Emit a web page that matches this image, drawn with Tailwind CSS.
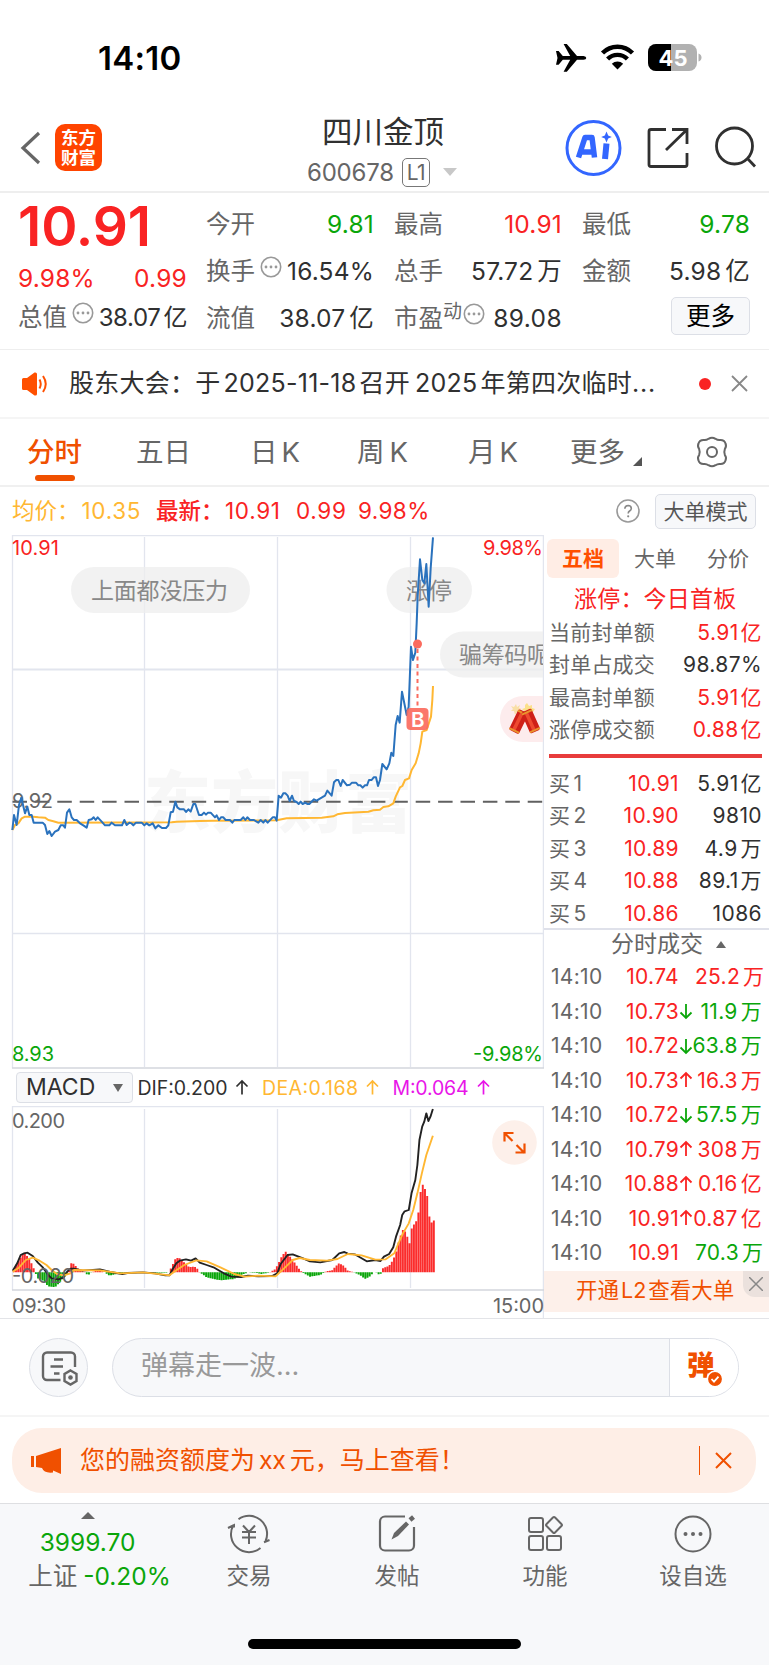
<!DOCTYPE html>
<html lang="zh-CN">
<head>
<meta charset="utf-8">
<title>四川金顶 600678</title>
<script src="https://cdn.jsdelivr.net/npm/@tailwindcss/browser@4"></script>
</head>
<body class="bg-white text-[#303030] font-['Inter','Noto_Sans_CJK_SC',sans-serif]">
<div class="w-[769px] h-[1665px] flex flex-col overflow-hidden whitespace-nowrap">

  <!-- status bar -->
  <div class="h-[115px] shrink-0 flex justify-between pl-[98px] pr-[67px]">
    <div class="mt-[38px] h-10 leading-10 text-[33px] font-semibold text-black tracking-[0.3px]">14:10</div>
    <svg class="mt-[40px]" width="147" height="36" viewBox="556 40 147 36">
      <path fill="#000" d="M557 51h2.600l4.200 5h7.400l-6.600-12h3.200l10.200 12h6.500q2.800.6 2.800 1.900t-2.800 1.900h-6.500l-10.200 12h-3.200l6.600-12h-7.400l-4.200 5h-2.600l1.500-6.900z"/>
      <g fill="none" stroke="#000" stroke-width="4.400"><path d="M603.500 53a21 21 0 0 1 30 0"/><path d="M608.600 59a14 14 0 0 1 19.800 0"/></g>
      <path fill="#000" d="M612.800 63.800a8.500 8.500 0 0 1 11.400 0l-5.700 5.700z"/>
      <clipPath id="cell"><rect x="649" y="44" width="49" height="27" rx="8"/></clipPath>
      <g clip-path="url(#cell)"><rect x="649" y="44" width="49" height="27" fill="#b1b1b1"/><rect x="649" y="44" width="23" height="27" fill="#000"/></g>
      <path d="M699.500 53.500q3 1 3 4t-3 4z" fill="#b1b1b1"/>
      <text x="674" y="65.500" text-anchor="middle" font-size="22" font-weight="700" fill="#fff" textLength="29">45</text>
    </svg>
  </div>

  <!-- navigation -->
  <div class="h-[78px] shrink-0 flex border-b-2 border-[#eeeeee] pl-[19px]">
    <svg class="mt-[15px]" width="24" height="36" viewBox="0 0 24 36"><path d="M20 3 4 18 20 33" fill="none" stroke="#666" stroke-width="3.200"/></svg>
    <div class="ml-3 mt-[9px] w-[47px] h-[47px] rounded-[10px] bg-[#ff4400] text-white font-bold text-[17.500px] leading-[19.500px] flex flex-col items-center justify-center"><span>东方</span><span>财富</span></div>
    <div class="ml-[206px] w-[150px] flex flex-col">
      <div class="h-[34px] leading-[34px] text-[30.500px] text-center">四川金顶</div>
      <div class="mt-[7px] -ml-px h-8 flex items-center text-[#666] text-[24px] tracking-[-0.2px]">
        <span class="mt-px">600678</span>
        <span class="ml-[8px] w-[28px] h-[29px] border border-[#777] rounded-[5px] text-[21px] leading-[27px] text-center tracking-[-0.5px]">L1</span>
        <svg class="ml-[13px] shrink-0" width="14" height="8"><path d="M0 0h14L7 8z" fill="#c8c8c8"/></svg>
      </div>
    </div>
    <svg class="ml-[105px] mt-[3px]" width="196" height="60" viewBox="564 118 196 60">
      <circle cx="594.500" cy="148" r="26.500" fill="none" stroke="#3366ff" stroke-width="3"/>
      <path d="M579.500 157.500 586 137.500h7l2.500 20M582 152h11" fill="none" stroke="#3366ff" stroke-width="5.500" stroke-linejoin="round"/>
      <path d="m607.500 143.500-1.500 15.500" stroke="#3366ff" stroke-width="6"/>
      <path d="m607.500 131.500 1.700 4 3.600 1.500-3.600 1.500-1.700 4-1.700-4-3.600-1.500 3.600-1.500z" fill="#3366ff"/>
      <g fill="none" stroke="#303030" stroke-width="2.800"><path d="M667 129.500h-15a2 2 0 0 0-2 2v33a2 2 0 0 0 2 2h34a2 2 0 0 0 2-2V153M673 129.500h15V144M687 130.500 667 150"/>
      <circle cx="735.500" cy="146" r="18"/><path d="m748 158 8 8.500"/></g>
    </svg>
  </div>

  <!-- quote summary -->
  <div class="h-[157px] shrink-0 flex border-b border-[#eeeeee] pl-[18px] text-[24.500px]">
    <div class="w-[169px]">
      <div class="mt-[4px] h-[58px] leading-[58px] text-[55px] font-semibold text-[#f92323] tracking-[-0.1px]">10.91</div>
      <div class="mt-[7px] h-8 flex justify-between items-center text-[#f92323] tracking-[0.2px]"><span>9.98%</span><span>0.99</span></div>
      <div class="mt-[7px] h-8 flex items-center"><span class="text-[#666]">总值</span>
        <svg class="ml-[5px] mb-[9px]" width="22" height="22"><circle cx="11" cy="11" r="9.700" fill="none" stroke="#999" stroke-width="1.600"/><g fill="#999"><circle cx="6" cy="11" r="1.400"/><circle cx="11" cy="11" r="1.400"/><circle cx="16" cy="11" r="1.400"/></g></svg>
        <span class="ml-auto tracking-[-0.4px] pt-0.5 text-[24px]">38.07<span class="ml-[3px]">亿</span></span></div>
    </div>
    <div class="ml-[19px] w-[168px] flex flex-col gap-[15px] mt-[15px]">
      <div class="h-8 flex items-center justify-between"><span class="text-[#666]">今开</span><span class="text-[#0aa60a] tracking-[0.2px]">9.81</span></div>
      <div class="h-8 flex items-center"><span class="text-[#666]">换手</span>
        <svg class="ml-[5px] mb-[9px]" width="22" height="22"><circle cx="11" cy="11" r="9.700" fill="none" stroke="#999" stroke-width="1.600"/><g fill="#999"><circle cx="6" cy="11" r="1.400"/><circle cx="11" cy="11" r="1.400"/><circle cx="16" cy="11" r="1.400"/></g></svg>
        <span class="ml-auto tracking-[0.2px]">16.54%</span></div>
      <div class="h-8 flex items-center justify-between"><span class="text-[#666]">流值</span><span class="tracking-[0.2px]">38.07<span class="ml-1">亿</span></span></div>
    </div>
    <div class="ml-5 w-[168px] flex flex-col gap-[15px] mt-[15px]">
      <div class="h-8 flex items-center justify-between"><span class="text-[#666]">最高</span><span class="text-[#f92323] tracking-[0.2px]">10.91</span></div>
      <div class="h-8 flex items-center justify-between"><span class="text-[#666]">总手</span><span class="tracking-[0.2px]">57.72<span class="ml-1">万</span></span></div>
      <div class="h-8 flex items-center"><span class="text-[#666]">市盈</span><span class="text-[#666] text-[19px] mb-3">动</span>
        <svg class="ml-[1px] mb-[9px]" width="22" height="22"><circle cx="11" cy="11" r="9.700" fill="none" stroke="#999" stroke-width="1.600"/><g fill="#999"><circle cx="6" cy="11" r="1.400"/><circle cx="11" cy="11" r="1.400"/><circle cx="16" cy="11" r="1.400"/></g></svg>
        <span class="ml-auto tracking-[0.4px]">89.08</span></div>
    </div>
    <div class="ml-5 w-[168px] flex flex-col gap-[15px] mt-[15px]">
      <div class="h-8 flex items-center justify-between"><span class="text-[#666]">最低</span><span class="text-[#0aa60a] tracking-[0.2px]">9.78</span></div>
      <div class="h-8 flex items-center justify-between"><span class="text-[#666]">金额</span><span class="tracking-[0.2px]">5.98<span class="ml-1">亿</span></span></div>
      <div class="-mt-[5px] self-end w-[79px] h-[38px] leading-[36px] text-center rounded-[5px] border border-[#dcdfe6] bg-[#f7f8fa] text-black">更多</div>
    </div>
  </div>

  <!-- announcement -->
  <div class="h-[69px] shrink-0 flex items-center border-b-2 border-[#f5f5f5] pl-[22px] text-[25px]">
    <svg width="26" height="24" viewBox="0 0 26 24"><path d="M0 7.500Q0 6 1.500 6H5l7.500-5.500Q15 0 15 2v20q0 2-2.500 1.500L5 18H1.500Q0 18 0 16.500z" fill="#ff5000"/><path d="M17.500 7.500q2.500 4.500 0 9M21 4q5.500 8 0 16" fill="none" stroke="#ff5000" stroke-width="2"/></svg>
    <div class="ml-[21px] w-[619px] tracking-[0.25px]">股东大会：于<span class="mx-[3px] tracking-[0.25px]">2025-11-18</span>召开<span class="ml-[5px] mr-[3px]">2025</span>年第四次临时<span class="tracking-[0.8px]">...</span></div>
    <div class="ml-[11px] w-3 h-3 rounded-full bg-[#f92323]"></div>
    <svg class="ml-[20px]" width="17" height="17"><path d="m1 1 15 15M16 1 1 16" stroke="#888" stroke-width="1.800"/></svg>
  </div>

  <!-- period tabs -->
  <div class="h-[68px] shrink-0 flex border-b-2 border-[#f0f0f0] text-[27.500px] text-[#666] leading-[66px]">
    <div class="ml-[27px] w-[55px] flex flex-col items-center text-[#f05000] font-medium"><span class="h-[56px]">分时</span><span class="w-10 h-[6px] rounded-full bg-[#f05000]"></span></div>
    <div class="ml-[54px] w-[56px]">五日</div>
    <div class="ml-[58px] w-[50px]">日<span class="ml-[4px]">K</span></div>
    <div class="ml-[57px] w-[50px]">周<span class="ml-[5px]">K</span></div>
    <div class="ml-[61px] w-[50px]">月<span class="ml-[4px]">K</span></div>
    <div class="ml-[52px] w-[56px]">更多</div>
    <svg class="ml-[7px] mt-[38px]" width="9" height="9"><path d="M9 0v9H0z" fill="#555"/></svg>
    <svg class="ml-[52px] mt-[16px]" width="36" height="34" viewBox="-18 -17 36 34"><path d="M-3.500-13.200Q0-15.500 3.500-13.200 5.800-11.500 8.500-12 12.500-12 13.500-8.500 14.800-5.500 12.900-3.200 11.700 0 12.900 3.200 14.800 5.500 13.500 8.500 12.500 12 8.500 12 5.800 11.500 3.500 13.200 0 15.500-3.500 13.200-5.800 11.500-8.500 12-12.500 12-13.500 8.500-14.800 5.500-12.900 3.200-11.700 0-12.900-3.200-14.800-5.500-13.500-8.500-12.500-12-8.500-12-5.800-11.500-3.500-13.200z" fill="none" stroke="#666" stroke-width="2"/><circle r="5" fill="none" stroke="#666" stroke-width="2"/></svg>
  </div>

  <!-- price line -->
  <div class="h-[48px] shrink-0 flex items-center pl-[12px] text-[22.500px]">
    <div class="w-[144px] text-[#ffb732]">均价：<span class="ml-[2px] tracking-[0.7px]">10.35</span></div>
    <div class="w-[69px] text-[#f92323] font-medium">最新：</div>
    <div class="w-[71px] text-[#f92323] tracking-[0.7px]">10.91</div>
    <div class="w-[62px] text-[#f92323] tracking-[0.7px]">0.99</div>
    <div class="w-[258px] text-[#f92323] tracking-[0.4px]">9.98%</div>
    <svg width="24" height="24"><circle cx="12" cy="12" r="11" fill="none" stroke="#999" stroke-width="1.600"/><path d="M8.800 9.800q.2-3.300 3.400-3.300 3 .1 3.100 2.900 0 1.500-1.700 2.600-1.400.9-1.400 2.500" fill="none" stroke="#888" stroke-width="1.600"/><circle cx="12.200" cy="17.300" r="1.100" fill="#888"/></svg>
    <div class="ml-[15px] w-[101px] h-[35px] leading-[33px] text-center text-[21px] text-[#555] rounded-[5px] border border-[#dcdfe6] bg-[#f7f8fa]">大单模式</div>
  </div>

  <!-- charts and order book -->
  <div class="h-[784px] shrink-0 flex border-b-[1.500px] border-[#e3e4e8]">
    <div class="w-[544px] flex flex-col">
      <svg width="544" height="534" viewBox="0 535 544 534" class="shrink-0">
        <g stroke="#e2e5ee" stroke-width="1.300" fill="none">
          <path d="M12 535.700h532M12.500 535v533M543.400 535v533M144.500 537v530M277.500 537v530M410.500 537v530M12 933.500h532"/>
          <path d="M12 669.500h532" stroke-width="2"/>
        </g>
        <text x="144" y="827" font-size="67" font-weight="900" fill="#f7f7f7" textLength="268">东方财富</text>
        <path d="M12 1068h532" stroke="#d3d6dd" stroke-width="1.500"/>
        <g fill="#eeeeee" fill-opacity=".75"><rect x="71" y="567" width="179" height="46" rx="23"/><rect x="386.500" y="567" width="85.500" height="46" rx="23"/><path d="M543 631.500H463a23 23 0 0 0 0 46h80z"/></g>
        <path d="M543 696H523a23 23 0 0 0 0 46h20z" fill="#fdeced"/>
        <g font-size="23" fill="#888"><text x="91" y="599" textLength="137">上面都没压力</text><text x="406" y="599">涨停</text><svg x="440" y="631" width="103" height="46"><text x="19" y="32" textLength="91">骗筹码呢</text></svg></g>
        <path d="M12 801.800h531" stroke="#606060" stroke-width="2" stroke-dasharray="14.500 7.900" stroke-dashoffset="-.5"/>
        <g font-size="20">
          <text x="12" y="555" fill="#f92323" textLength="47">10.91</text><text x="543" y="555" text-anchor="end" fill="#f92323" textLength="60">9.98%</text>
          <text x="12" y="807.500" fill="#666" textLength="41">9.92</text><text x="12" y="1061" fill="#0aa60a" textLength="42">8.93</text><text x="543" y="1061" text-anchor="end" fill="#0aa60a" textLength="70">-9.98%</text>
        </g>
        <g transform="translate(0 530) scale(.33333)" fill="none" stroke-width="6" stroke-linejoin="round">
          <polyline stroke="#ffb732" points="37,900 45,885 55,880 65,865 75,860 100,860 115,862 135,863 145,870 160,874 175,878 515,877 530,875 600,873 640,872 830,871 860,865 965,863 1000,859 1012,853 1035,849 1105,845 1120,841 1140,839 1150,831 1165,829 1180,820 1187,800 1200,772 1207,768 1215,750 1227,745 1235,720 1247,700 1256,670 1262,640 1267,605 1280,600 1293,560 1297,510 1299,468"/>
          <polyline stroke="#2a72bd" points="37,900 42,855 50,885 57,825 64,803 75,850 82,830 88,855 95,855 101,878 128,878 135,885 142,912 148,903 155,918 165,905 175,900 182,886 190,886 195,893 201,848 208,838 215,862 222,870 230,870 240,880 250,886 260,893 266,870 275,868 281,862 287,870 293,862 305,875 315,886 328,886 335,878 345,886 366,886 373,870 380,885 388,878 394,880 400,886 408,878 425,878 433,886 440,880 448,886 458,880 466,895 475,886 486,894 498,894 505,886 512,847 519,845 526,815 532,832 540,838 552,838 558,846 565,838 572,845 580,822 586,822 597,855 605,855 612,848 618,854 624,848 632,848 645,862 650,856 657,870 663,862 670,862 677,870 690,870 697,878 703,870 722,870 730,862 736,870 742,862 750,870 762,870 775,878 782,870 790,878 796,870 803,878 818,862 825,862 830,872 836,797 843,803 850,790 856,790 863,797 869,813 876,797 882,813 890,816 896,822 902,815 908,822 916,818 922,822 928,822 942,808 950,812 956,808 975,797 982,782 995,797 1002,757 1009,750 1015,750 1022,768 1028,750 1041,766 1050,764 1056,758 1068,758 1075,766 1081,766 1088,773 1095,766 1101,766 1107,750 1115,750 1121,742 1128,742 1134,768 1140,750 1147,702 1160,718 1168,700 1174,668 1180,678 1187,585 1193,558 1199,578 1206,485 1220,555 1226,530 1233,350 1239,390 1246,368 1250,280 1253,200 1260,88 1267,150 1273,160 1279,102 1286,230 1292,115 1299,22"/>
        </g>
        <path d="M417.500 649v60" stroke="#fb6b5e" stroke-width="2" stroke-dasharray="4 3.500"/><circle cx="417.500" cy="644" r="4.500" fill="#fb6b5e"/>
        <rect x="406.500" y="708" width="22" height="22" rx="4" fill="#fb6b5e" fill-opacity=".92"/><text x="417.700" y="726.500" text-anchor="middle" font-size="20.500" font-weight="600" fill="#fff">B</text>
        <!-- firecracker sticker -->
        <g>
          <path d="m516 704 1 3 3-2-1 3 3 1-3 1 1 3-3-1-2 3-1-4-3 0 2-2-2-3 3 1z" fill="#f9dfa6"/>
          <path d="m527 703 2 3 3-1 0 3 3 1-2 3 0 3h-9l0-4-2-2 3-1 0-3z" fill="#fbe08a"/>
          <g transform="translate(518.500 722) rotate(26)"><rect x="-5.500" y="-12" width="11" height="23" rx="2" fill="#cf2018"/><rect x="-2.500" y="-10" width="3.500" height="19" fill="#ee4a30"/><path d="M-5.500-10H5.500M-5.500 9.500H5.500" stroke="#e9942d" stroke-width="2"/></g>
          <g transform="translate(531 721.500) rotate(-24)"><rect x="-5.500" y="-12" width="11" height="23" rx="2" fill="#cf2018"/><rect x="-2.500" y="-10" width="3.500" height="19" fill="#ee4a30"/><path d="M-5.500-10H5.500M-5.500 9.500H5.500" stroke="#e9942d" stroke-width="2"/></g>
        </g>
      </svg>
      <div class="h-[37px] shrink-0 flex items-center pl-[16px] text-[20px]">
        <div class="w-[117px] h-[31px] flex items-center rounded-[4px] border-[1.500px] border-[#dcdfe6] bg-[#f7f8fa] pl-[9px] text-[23px]">MACD<svg class="ml-auto mr-[9px]" width="10" height="8"><path d="M0 0h10L5 8z" fill="#666"/></svg></div>
        <svg class="shrink-0" width="370" height="30" font-size="19.500">
          <text x="4.500" y="22" fill="#303030" textLength="90">DIF:0.200</text><text x="129" y="22" fill="#ffb732" textLength="96">DEA:0.168</text><text x="259.500" y="22" fill="#e815e8" textLength="76">M:0.064</text>
          <g fill="none" stroke-width="1.700"><path d="M109 21.500V8M103.500 13.500 109 8l5.500 5.500" stroke="#303030"/><path d="M239.500 21.500V8M234 13.500 239.500 8l5.500 5.500" stroke="#ffb732"/><path d="M350.500 21.500V8M345 13.500 350.500 8l5.500 5.500" stroke="#e815e8"/></g>
        </svg>
      </div>
      <svg width="544" height="212" viewBox="0 1106 544 212" class="shrink-0">
        <g stroke="#e2e5ee" stroke-width="1.300" fill="none"><path d="M12 1106.700h532M12.500 1106v184M543.400 1068v250M144.500 1109v179M277.500 1109v179M410.500 1109v179"/></g>
        <path d="M12 1290h532" stroke="#d3d6dd" stroke-width="1.500"/>
        <g transform="translate(0 1040) scale(.34437 .33333)" fill="none" stroke-linejoin="round">
          <path id="up" fill="#fb2c2c"/><path id="down" fill="#0aa60a"/>
          <polyline stroke-width="5.500" stroke="#222" points="37,692 50,670 60,645 70,640 80,638 95,648 110,668 125,683 140,705 150,715 170,718 185,712 195,695 205,686 215,686 240,692 290,688 320,696 355,702 370,699 415,697 450,700 480,706 492,706 500,690 512,670 522,662 540,658 555,662 568,655 580,668 600,675 620,682 650,700 672,710 700,711 720,707 750,709 790,708 805,700 815,672 835,645 850,643 880,655 900,664 930,667 965,660 985,640 1000,636 1010,641 1030,643 1045,652 1065,664 1090,660 1105,663 1115,650 1130,642 1142,622 1150,590 1162,555 1168,525 1175,514 1187,510 1195,460 1206,420 1212,375 1218,300 1226,260 1232,245 1238,220 1244,243 1250,230 1257,207"/>
          <polyline stroke-width="5.500" stroke="#ffb732" points="37,695 55,683 75,660 95,653 115,662 135,675 150,690 165,702 185,706 205,700 215,690 290,691 350,700 415,697 450,701 492,706 510,692 535,675 570,661 600,664 640,682 680,702 710,710 750,707 800,709 825,685 850,660 870,654 900,660 950,662 980,657 1010,642 1050,646 1090,659 1120,658 1145,640 1155,615 1170,580 1187,550 1200,510 1212,460 1225,400 1238,345 1257,287"/>
        </g>
        <g font-size="20" fill="#666"><text x="12" y="1128" textLength="53">0.200</text><text x="12" y="1282.500" textLength="62">-0.020</text><text x="12" y="1313" textLength="54">09:30</text><text x="544" y="1313" text-anchor="end" textLength="51">15:00</text></g>
        <circle cx="514.500" cy="1142.500" r="22.300" fill="#fdf0ea"/>
        <path d="M512.500 1141 504.500 1133M504.500 1141.500v-8.500h9M516.500 1145l8 8M524.500 1143.500v9h-9" fill="none" stroke="#f05000" stroke-width="2.200"/>
      </svg>
    </div>

    <!-- order book -->
    <div class="w-[225px] flex flex-col text-[21px] text-[#666]">
      <div class="mt-[4px] ml-[3px] h-[39px] flex leading-[39px] text-center"><span class="w-[72px] rounded-[6px] bg-[#ffede5] text-[#ff5000] font-bold">五档</span><span class="w-[72px]">大单</span><span class="w-[74px]">分价</span></div>
      <div class="mt-[5px] pl-[30px] h-[33px] leading-[33px] text-[23px] text-[#f92323] tracking-[0.2px]">涨停：今日首板</div>
      <div class="pl-[5px] pr-[7px] flex flex-col">
        <div class="h-[32.500px] flex items-center justify-between"><span class="tracking-[0.2px]">当前封单额</span><span class="text-[#f92323] tracking-[0.4px]">5.91<span class="ml-0.5">亿</span></span></div>
        <div class="h-[32.500px] flex items-center justify-between"><span class="tracking-[0.2px]">封单占成交</span><span class="text-[#303030] tracking-[0.4px]">98.87%</span></div>
        <div class="h-[32.500px] flex items-center justify-between"><span class="tracking-[0.2px]">最高封单额</span><span class="text-[#f92323] tracking-[0.4px]">5.91<span class="ml-0.5">亿</span></span></div>
        <div class="h-[32.500px] flex items-center justify-between"><span class="tracking-[0.2px]">涨停成交额</span><span class="text-[#f92323] tracking-[0.4px]">0.88<span class="ml-0.5">亿</span></span></div>
      </div>
      <div class="mt-[8px] ml-[5px] mr-[7px] h-1 shrink-0 bg-[#e83c3c]"></div>
      <div class="mt-[9px] pl-[5px] pr-[7px] flex flex-col tracking-[0.4px]">
        <div class="h-[32.500px] flex items-center"><span>买<span class="ml-[3px]">1</span></span><span class="ml-auto text-[#f92323]">10.91</span><span class="w-[83px] text-right text-[#303030]">5.91<span class="ml-0.5">亿</span></span></div>
        <div class="h-[32.500px] flex items-center"><span>买<span class="ml-[3px]">2</span></span><span class="ml-auto text-[#f92323]">10.90</span><span class="w-[83px] text-right text-[#303030]">9810</span></div>
        <div class="h-[32.500px] flex items-center"><span>买<span class="ml-[3px]">3</span></span><span class="ml-auto text-[#f92323]">10.89</span><span class="w-[83px] text-right text-[#303030]">4.9<span class="ml-[3px]">万</span></span></div>
        <div class="h-[32.500px] flex items-center"><span>买<span class="ml-[3px]">4</span></span><span class="ml-auto text-[#f92323]">10.88</span><span class="w-[83px] text-right text-[#303030]">89.1<span class="ml-0.5">万</span></span></div>
        <div class="h-[32.500px] flex items-center"><span>买<span class="ml-[3px]">5</span></span><span class="ml-auto text-[#f92323]">10.86</span><span class="w-[83px] text-right text-[#303030]">1086</span></div>
      </div>
      <div class="-mt-[2px] h-[32px] shrink-0 flex items-center border-t-2 border-[#dfe1ea] pl-[67px] text-[23px]">分时成交<svg class="ml-[13px]" width="10" height="7"><path d="M5 0l5 7H0z" fill="#666"/></svg></div>
      <div class="pl-[7px] pr-[7px] flex flex-col text-[#f92323] tracking-[0.3px]">
        <div class="h-[34.500px] flex items-center"><span class="text-[#666]">14:10</span><span class="ml-auto">10.74</span><span class="w-[16px]"></span><span class="w-[67px] text-right">25.2<span class="ml-[3px]">万</span></span></div>
        <div class="h-[34.500px] flex items-center"><span class="text-[#666]">14:10</span><span class="ml-auto">10.73</span><svg class="w-[14px] mr-[2px] shrink-0" height="20" viewBox="0 0 14 20"><path d="M7 3v14M1.500 11.500 7 17l5.500-5.500" fill="none" stroke="#0aa60a" stroke-width="1.800"/></svg><span class="w-[67px] text-right text-[#0aa60a]">11.9<span class="ml-[3px]">万</span></span></div>
        <div class="h-[34.500px] flex items-center"><span class="text-[#666]">14:10</span><span class="ml-auto">10.72</span><svg class="w-[14px] mr-[2px] shrink-0" height="20" viewBox="0 0 14 20"><path d="M7 3v14M1.500 11.500 7 17l5.500-5.500" fill="none" stroke="#0aa60a" stroke-width="1.800"/></svg><span class="w-[67px] flex justify-end text-[#0aa60a]">63.8<span class="ml-[3px]">万</span></span></div>
        <div class="h-[34.500px] flex items-center"><span class="text-[#666]">14:10</span><span class="ml-auto">10.73</span><svg class="w-[14px] mr-[2px] shrink-0" height="20" viewBox="0 0 14 20"><path d="M7 17V3M1.500 8.500 7 3l5.500 5.500" fill="none" stroke="#f92323" stroke-width="1.800"/></svg><span class="w-[67px] text-right">16.3<span class="ml-[3px]">万</span></span></div>
        <div class="h-[34.500px] flex items-center"><span class="text-[#666]">14:10</span><span class="ml-auto">10.72</span><svg class="w-[14px] mr-[2px] shrink-0" height="20" viewBox="0 0 14 20"><path d="M7 3v14M1.500 11.500 7 17l5.500-5.500" fill="none" stroke="#0aa60a" stroke-width="1.800"/></svg><span class="w-[67px] text-right text-[#0aa60a]">57.5<span class="ml-[3px]">万</span></span></div>
        <div class="h-[34.500px] flex items-center"><span class="text-[#666]">14:10</span><span class="ml-auto">10.79</span><svg class="w-[14px] mr-[2px] shrink-0" height="20" viewBox="0 0 14 20"><path d="M7 17V3M1.500 8.500 7 3l5.500 5.500" fill="none" stroke="#f92323" stroke-width="1.800"/></svg><span class="w-[67px] text-right">308<span class="ml-[3px]">万</span></span></div>
        <div class="h-[34.500px] flex items-center"><span class="text-[#666]">14:10</span><span class="ml-auto">10.88</span><svg class="w-[14px] mr-[2px] shrink-0" height="20" viewBox="0 0 14 20"><path d="M7 17V3M1.500 8.500 7 3l5.500 5.500" fill="none" stroke="#f92323" stroke-width="1.800"/></svg><span class="w-[67px] text-right">0.16<span class="ml-[3px]">亿</span></span></div>
        <div class="h-[34.500px] flex items-center"><span class="text-[#666]">14:10</span><span class="ml-auto">10.91</span><svg class="w-[14px] mr-[2px] shrink-0" height="20" viewBox="0 0 14 20"><path d="M7 17V3M1.500 8.500 7 3l5.500 5.500" fill="none" stroke="#f92323" stroke-width="1.800"/></svg><span class="w-[67px] flex justify-end">0.87<span class="ml-[3px]">亿</span></span></div>
        <div class="h-[34.500px] flex items-center"><span class="text-[#666]">14:10</span><span class="ml-auto">10.91</span><span class="w-[16px]"></span><span class="w-[67px] text-right text-[#0aa60a]">70.3<span class="ml-[3px]">万</span></span></div>
      </div>
      <div class="mt-[1px] h-[41px] shrink-0 bg-[#fdf0ea] flex justify-between pl-[32px] text-[#f05000] leading-[38px] text-[21.500px]"><span>开通<span class="mx-[2px]">L2</span>查看大单</span>
        <span class="w-[26px] h-[26px] rounded-bl-[12px] bg-[#ebe1dd] flex items-center justify-center"><svg width="14" height="14"><path d="m0 0 14 14M14 0 0 14" stroke="#888" stroke-width="1.500"/></svg></span></div>
    </div>
  </div>

  <!-- comment input -->
  <div class="h-[98px] shrink-0 flex items-center border-b-2 border-[#f5f5f5] pl-[29px]">
    <div class="w-[59px] h-[59px] rounded-full border-[1.500px] border-[#dcdfe6] bg-[#f7f8fa] flex items-center justify-center">
      <svg class="ml-[2px] mt-[2px]" width="38" height="36" viewBox="0 0 38 36"><g fill="none" stroke="#666" stroke-width="2.400"><path d="M19.500 30H6a4 4 0 0 1-4-4V6.500a4 4 0 0 1 4-4h24a4 4 0 0 1 4 4V17M13 9.500h9M9.500 16.500h12.500M13 23.500h5.500"/><path d="m29.500 20.500 6 3.500v7l-6 3.500-6-3.500v-7z"/></g><circle cx="29.500" cy="27.500" r="2.300" fill="#666"/></svg>
    </div>
    <div class="ml-[24px] w-[627px] h-[59px] rounded-full border-[1.500px] border-[#dcdfe6] bg-[#f7f8fa] flex overflow-hidden">
      <div class="pl-[28px] flex-1 leading-[54px] text-[27px] text-[#999]">弹幕走一波...</div>
      <div class="w-[69px] border-l-[1.500px] border-[#dcdfe6] bg-white flex items-center pl-[17px] relative text-[#f05000] text-[27.500px] font-black"><span class="mb-0.5">弹</span>
        <svg class="absolute left-[36px] top-[31px]" width="18" height="18"><circle cx="9" cy="9" r="7.700" fill="#f05000" stroke="#fff" stroke-width="1.600"/><path d="m5.500 9 2.500 2.700 4.500-5" fill="none" stroke="#fff" stroke-width="1.800"/></svg></div>
    </div>
  </div>

  <!-- promo banner -->
  <div class="h-[86px] shrink-0 pt-[11px] pl-[12px]">
    <div class="w-[744px] h-[65px] rounded-[30px] bg-[#feeee6] flex items-center pl-[19px] text-[25px] text-[#f05000]">
      <svg width="31" height="28" viewBox="0 0 31 28"><path d="M0 9h3v11H0zM5 9 30 1v26l-8-3.500v2q-9 1-11-4.500L5 20z" fill="#f05000"/></svg>
      <span class="ml-[18px] mt-px">您的融资额度为<span class="mx-[4px] tracking-[-0.3px]">xx</span>元，马上查看！</span>
      <span class="ml-auto w-[1.500px] h-[29px] bg-[#f05000]"></span>
      <svg class="ml-[15px] mr-[24px]" width="17" height="17"><path d="m1 1 15 15M16 1 1 16" stroke="#f05000" stroke-width="2"/></svg>
    </div>
  </div>

  <!-- bottom bar -->
  <div class="h-[162px] shrink-0 bg-[#f7f8fa] border-t-[1.500px] border-[#dedfe2] flex flex-col items-center text-[22.500px] text-[#666]">
    <div class="w-full h-[135px] flex">
      <div class="w-[175px] flex flex-col items-center text-[24.500px]">
        <svg class="mt-[8px]" width="14" height="7"><path d="M7 0l7 7H0z" fill="#666"/></svg>
        <div class="mt-[7px] h-8 leading-8 text-[#0aa60a]">3999.70</div>
        <div class="mt-[2px] ml-[24px] h-8 leading-8">上证<span class="ml-[6px] text-[#0aa60a]">-0.20%</span></div>
      </div>
      <div class="w-[148px] flex flex-col items-center pt-[10px]">
        <svg width="44" height="40" viewBox="-22 -20 44 40" fill="none" stroke="#666" stroke-width="2"><path d="M-10.500-14.700A18 18 0 0 1 16.600 7M20.500 6l-5.500 2.200M11.500 14A18 18 0 0 1-15.500-9M-21-6l6-3v2.500M-6-8.500 0-2l6-6.500M0-2V10M-7-2H7M-7 3.500H7"/></svg><span class="mt-[6px] h-8 leading-8">交易</span></div>
      <div class="w-[148px] flex flex-col items-center pt-[10px]">
        <svg width="44" height="40" viewBox="-22 -20 44 40" fill="none" stroke="#666" stroke-width="2.200"><path d="M8-17.500h-20a5 5 0 0 0-5 5v24a5 5 0 0 0 5 5h24a5 5 0 0 0 5-5V-7"/><path d="M-5.500 5.500-3-1 9-12.500 12-9.500 1 2z" fill="#666" stroke="none"/><path d="m13-14 3.500-3" stroke-width="4.500"/></svg><span class="mt-[6px] h-8 leading-8">发帖</span></div>
      <div class="w-[148px] flex flex-col items-center pt-[10px]">
        <svg width="44" height="40" viewBox="-22 -20 44 40" fill="none" stroke="#666" stroke-width="2"><rect x="-16" y="-16" width="14" height="14" rx="2"/><rect x="-16" y="2" width="14" height="14" rx="2"/><rect x="2" y="2" width="14" height="14" rx="2"/><rect x="3" y="-15" width="12" height="12" rx="1.500" transform="rotate(45 9 -9)"/></svg><span class="mt-[6px] h-8 leading-8">功能</span></div>
      <div class="w-[148px] flex flex-col items-center pt-[10px]">
        <svg width="44" height="40" viewBox="-22 -20 44 40"><circle r="17.500" fill="none" stroke="#666" stroke-width="2"/><g fill="#666"><circle cx="-7.500" r="2"/><circle r="2"/><circle cx="7.500" r="2"/></g></svg><span class="mt-[6px] h-8 leading-8">设自选</span></div>
    </div>
    <div class="mr-px w-[273px] h-[10px] rounded-full bg-black"></div>
  </div>
</div>

<script>
  const knots = [[37,0],[45,20],[60,45],[70,62],[78,50],[85,40],[95,20],[102,0],[110,-18],[125,-25],[140,-42],[160,-45],[175,-28],[190,-10],[198,0],[204,28],[215,25],[225,12],[240,3],[248,0],[255,-10],[265,0],[280,5],[300,3],[303,0],[318,-10],[340,-5],[360,-1],[485,-1],[490,0],[500,20],[510,42],[520,44],[535,30],[550,15],[560,17],[570,15],[580,0],[600,-15],[640,-24],[680,-20],[700,-8],[720,0],[745,-2],[760,-5],[783,0],[800,10],[810,30],[820,52],[830,62],[840,50],[850,38],[860,22],[870,8],[878,0],[900,-13],[930,-8],[942,0],[950,4],[965,6],[972,15],[985,28],[1000,18],[1010,5],[1027,0],[1045,-8],[1060,-20],[1075,-12],[1085,0],[1092,0],[1103,-9],[1108,0],[1112,12],[1130,20],[1142,38],[1150,60],[1160,102],[1172,132],[1180,115],[1190,85],[1196,135],[1205,148],[1212,158],[1217,195],[1224,270],[1232,255],[1240,235],[1246,170],[1254,148],[1262,158]];
  let up = '', down = '', k = 0;
  for (let x = 40; x <= 1261; x += 6.42) {
    while (k < knots.length - 2 && knots[k + 1][0] < x) k++;
    const [x0, a] = knots[k], [x1, b] = knots[k + 1];
    const h = a + (b - a) * (x - x0) / (x1 - x0);
    const bar = `M${(x - 2.8).toFixed(1)} 697h5.600v${(-h).toFixed(1)}h-5.600z`;
    if (h > 0) up += bar; else down += bar;
  }
  document.getElementById('up').setAttribute('d', up);
  document.getElementById('down').setAttribute('d', down);
</script>
</body>
</html>
